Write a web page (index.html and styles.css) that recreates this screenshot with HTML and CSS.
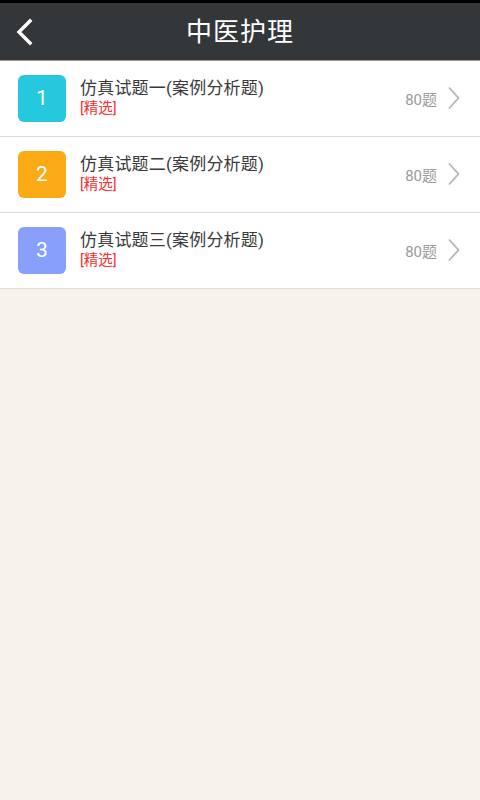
FILE: index.html
```html
<!DOCTYPE html>
<html lang="zh">
<head>
<meta charset="utf-8">
<title>中医护理</title>
<link rel="stylesheet" href="styles.css">
</head>
<body>
<div class="statusbar"></div>
<header class="topbar">
  <a class="back" aria-label="返回">
    <svg width="20" height="28" viewBox="0 0 20 28"><path d="M16 3 L5 14 L16 25" fill="none" stroke="#fff" stroke-width="3.4" stroke-linecap="square"/></svg>
  </a>
  <h1 class="title">中医护理</h1>
</header>
<ul class="list">
  <li class="row">
    <span class="num c1">1</span>
    <div class="text">
      <div class="name">仿真试题一(案例分析题)</div>
      <div class="tag">[精选]</div>
    </div>
    <span class="count">80题</span>
    <svg class="chev" width="14" height="24" viewBox="0 0 14 24"><path d="M2 1.5 L11.5 12 L2 22.5" fill="none" stroke="#b5b5b5" stroke-width="1.8"/></svg>
  </li>
  <li class="row">
    <span class="num c2">2</span>
    <div class="text">
      <div class="name">仿真试题二(案例分析题)</div>
      <div class="tag">[精选]</div>
    </div>
    <span class="count">80题</span>
    <svg class="chev" width="14" height="24" viewBox="0 0 14 24"><path d="M2 1.5 L11.5 12 L2 22.5" fill="none" stroke="#b5b5b5" stroke-width="1.8"/></svg>
  </li>
  <li class="row">
    <span class="num c3">3</span>
    <div class="text">
      <div class="name">仿真试题三(案例分析题)</div>
      <div class="tag">[精选]</div>
    </div>
    <span class="count">80题</span>
    <svg class="chev" width="14" height="24" viewBox="0 0 14 24"><path d="M2 1.5 L11.5 12 L2 22.5" fill="none" stroke="#b5b5b5" stroke-width="1.8"/></svg>
  </li>
</ul>
</body>
</html>
```
FILE: styles.css
```css
html, body {
  margin: 0;
  padding: 0;
  height: 100%;
}
body {
  background: #f6f3ec;
  font-family: Roboto, "Noto Sans CJK SC", sans-serif;
}
.statusbar {
  height: 3px;
  background: #000;
}
.topbar {
  height: 57px;
  background: #33373a;
  border-bottom: 1px solid #9a9a9a;
  display: flex;
  align-items: center;
  justify-content: center;
  position: relative;
}
.back {
  position: absolute;
  left: 14px;
  top: 15px;
  display: flex;
}
.title {
  margin: 0 0 4px 0;
  color: #fff;
  font-size: 26px;
  font-weight: normal;
  letter-spacing: 1px;
}
.list {
  list-style: none;
  margin: 0;
  padding: 0;
}
.row {
  background: #fff;
  border-bottom: 1px solid #dcdcdc;
  display: flex;
  align-items: center;
  padding: 0 19px 1px 18px;
  box-sizing: border-box;
  height: 76px;
}
.num {
  width: 48px;
  height: 47px;
  border-radius: 6px;
  color: #fff;
  font-size: 21px;
  display: flex;
  align-items: center;
  justify-content: center;
  flex: none;
}
.c1 { background: #25c8dc; }
.c2 { background: #fba915; }
.c3 { background: #88a0fb; }
.text {
  margin-left: 14px;
  flex: 1;
}
.name {
  font-size: 17px;
  color: #3a3a3a;
  line-height: 20px;
  letter-spacing: 0.2px;
}
.tag {
  font-size: 14.5px;
  color: #f53030;
  line-height: 18px;
  margin-top: 2px;
}
.count {
  font-size: 15px;
  color: #9a9a9a;
  margin-right: 10px;
}
.chev {
  flex: none;
}
```
